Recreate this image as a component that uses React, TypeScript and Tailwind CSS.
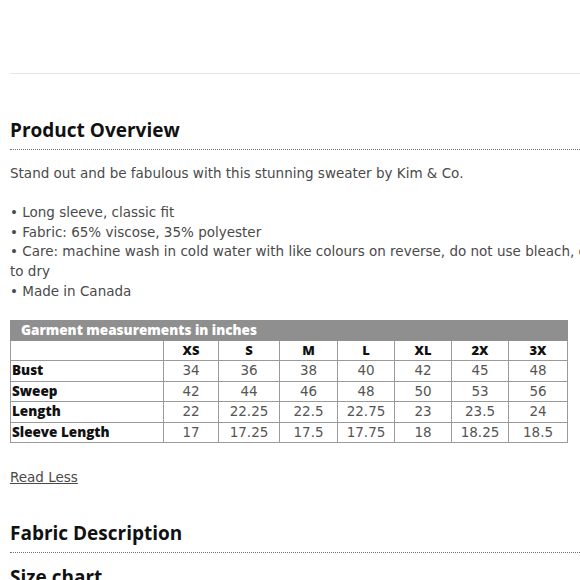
const sizes = ['XS', 'S', 'M', 'L', 'XL', '2X', '3X']

const rows: { label: string; values: string[] }[] = [
  { label: 'Bust', values: ['34', '36', '38', '40', '42', '45', '48'] },
  { label: 'Sweep', values: ['42', '44', '46', '48', '50', '53', '56'] },
  { label: 'Length', values: ['22', '22.25', '22.5', '22.75', '23', '23.5', '24'] },
  { label: 'Sleeve Length', values: ['17', '17.25', '17.5', '17.75', '18', '18.25', '18.5'] },
]

const colWidths = ['w-[153px]', 'w-[55px]', 'w-[61px]', 'w-[58px]', 'w-[57px]', 'w-[57px]', 'w-[57px]', 'w-[59px]']

function SectionTitle({ children }: { children: string }) {
  return (
    <div className="border-b border-dotted border-gray-500 pb-[7px]">
      <h2 className="text-[19px] font-bold leading-[24px] text-[#111]">{children}</h2>
    </div>
  )
}

export default function App() {
  return (
    <div
      className="w-[580px] h-[580px] overflow-hidden bg-white pl-[10px]"
      style={{ fontFamily: '"Open Sans", "Liberation Sans", sans-serif' }}
    >
      <div className="h-[73px]" />
      <div className="border-t border-[#e6e6e6]" />

      <div className="mt-[44px]">
        <SectionTitle>Product Overview</SectionTitle>
      </div>

      <div
        className="text-[13.5px] leading-[19.75px] text-[#4a4a4a] whitespace-nowrap"
        style={{ fontFamily: '"DejaVu Sans", sans-serif' }}
      >
        <p className="mt-[14px]">Stand out and be fabulous with this stunning sweater by Kim &amp; Co.</p>
        <p className="mt-[19px]">• Long sleeve, classic fit</p>
        <p>• Fabric: 65% viscose, 35% polyester</p>
        <p>• Care: machine wash in cold water with like colours on reverse, do not use bleach, do not tumble dry, lay flat</p>
        <p>to dry</p>
        <p>• Made in Canada</p>
      </div>

      <table className="mt-[18px] border-collapse text-[13px] leading-[19px]">
        <thead>
          <tr>
            <th
              colSpan={8}
              className="bg-[#8f8f8f] border border-[#8f8f8f] text-left text-white font-extrabold text-[13.5px] px-[10px] h-[20px] p-0"
            >
              Garment measurements in inches
            </th>
          </tr>
          <tr>
            {['', ...sizes].map((s, i) => (
              <th
                key={i}
                className={`${colWidths[i]} border border-[#9a9a9a] font-extrabold text-[#111] text-center h-[20.5px] p-0`}
              >
                {s}
              </th>
            ))}
          </tr>
        </thead>
        <tbody>
          {rows.map((r) => (
            <tr key={r.label}>
              <td className="border border-[#9a9a9a] font-extrabold text-[#111] text-left text-[13.5px] px-[1px] h-[20.5px] p-0">
                {r.label}
              </td>
              {r.values.map((v, i) => (
                <td
                  key={i}
                  className="border border-[#9a9a9a] text-center text-[#555] h-[20.5px] p-0"
                  style={{ fontFamily: '"DejaVu Sans", sans-serif', fontSize: '13.5px' }}
                >
                  {v}
                </td>
              ))}
            </tr>
          ))}
        </tbody>
      </table>

      <a
        className="block mt-[25px] text-[13.5px] leading-[19px] text-[#4a4a4a] underline w-fit"
        style={{ fontFamily: '"DejaVu Sans", sans-serif' }}
      >
        Read Less
      </a>

      <div className="mt-[34px]">
        <SectionTitle>Fabric Description</SectionTitle>
      </div>

      <h2 className="mt-[12px] text-[19px] font-bold leading-[24px] text-[#111]">Size chart</h2>
    </div>
  )
}
